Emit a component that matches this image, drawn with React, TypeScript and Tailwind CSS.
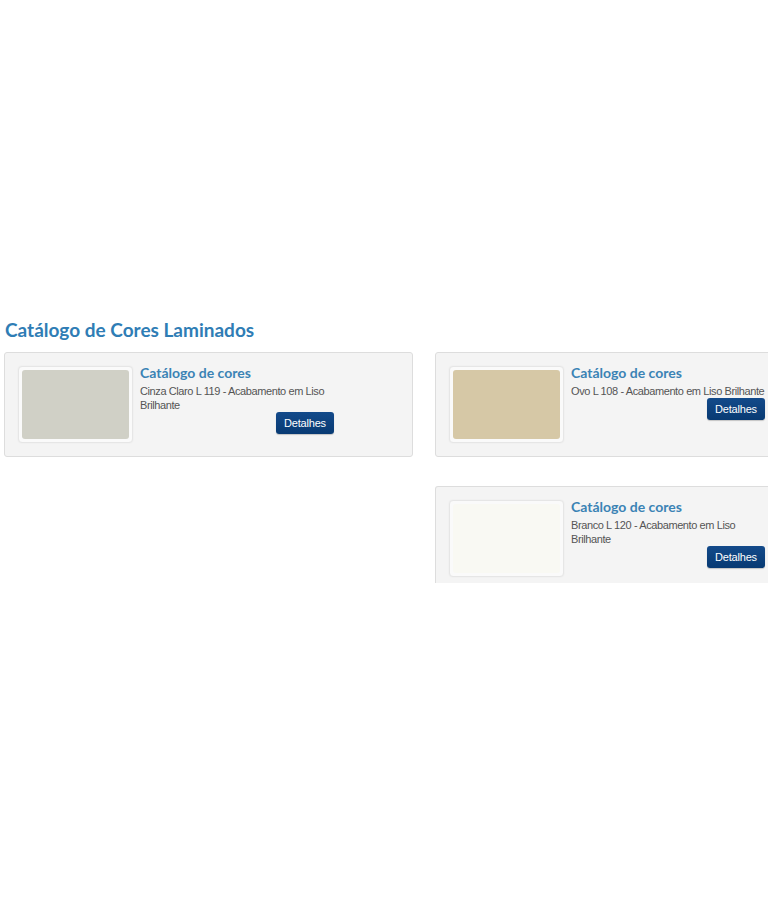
import React from "react";

type Item = { name: string; color: string };

function Card({ item, clip }: { item: Item; clip?: boolean }) {
  return (
    <div
      className={
        "w-[409px] shrink-0 bg-[#f4f4f4] border border-[#dddddd] rounded-[3px] px-[13px] pt-[13px] flex items-start " +
        (clip ? "h-[97px] overflow-hidden border-b-0 rounded-b-none" : "pb-[13px]")
      }
    >
      <div className="w-[115px] h-[77px] bg-[#fafafa] border border-[#e6e6e6] rounded-[4px] p-[3px] shadow-[0_0_2px_rgba(0,0,0,0.06)] shrink-0">
        <div className="w-full h-full rounded-[3px]" style={{ backgroundColor: item.color }} />
      </div>
      <div className="ml-[7px] w-[195px] flex flex-col">
        <div className="text-[14px] leading-[20px] font-bold text-[#3b83b5] -mt-[3px]" style={{ fontFamily: 'Lato, "Open Sans", sans-serif' }}>
          Catálogo de cores
        </div>
        <div className="text-[11px] leading-[14px] tracking-[-0.4px] text-[#555555] mt-[1px]" style={{ fontFamily: '"Liberation Sans", Arial, sans-serif' }}>
          {item.name}
        </div>
        <div className="flex justify-end pr-[1px]">
          <button
            className="w-[58px] h-[22px] rounded-[3px] bg-gradient-to-b from-[#134a8a] to-[#083a73] text-white text-[11px] tracking-[-0.2px] leading-[22px] text-center shadow-[0_1px_1px_rgba(0,0,0,0.2)]"
            style={{ fontFamily: '"Liberation Sans", Arial, sans-serif' }}
          >
            Detalhes
          </button>
        </div>
      </div>
    </div>
  );
}

export default function App() {
  return (
    <div className="w-[768px] h-[900px] bg-white overflow-hidden">
      <div className="pt-[316px] pl-[4px]">
        <h1
          className="text-[19px] leading-[28px] font-bold text-[#2f7db5] pl-[1px] mb-[8px]"
          style={{ fontFamily: 'Lato, "Open Sans", sans-serif' }}
        >
          Catálogo de Cores Laminados
        </h1>
        <div className="flex items-start gap-[22px]">
          <Card item={{ name: "Cinza Claro L 119 - Acabamento em Liso Brilhante", color: "#d0d0c6" }} />
          <div className="flex flex-col gap-[29px]">
            <Card item={{ name: "Ovo L 108 - Acabamento em Liso Brilhante", color: "#d6c8a6" }} />
            <Card clip item={{ name: "Branco L 120 - Acabamento em Liso Brilhante", color: "#f9f9f3" }} />
          </div>
        </div>
      </div>
    </div>
  );
}
